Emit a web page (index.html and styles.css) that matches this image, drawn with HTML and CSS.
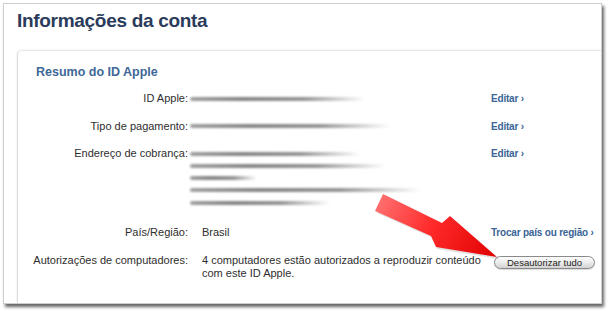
FILE: index.html
```html
<!DOCTYPE html>
<html lang="pt-BR">
<head>
<meta charset="utf-8">
<title>Informações da conta</title>
<link rel="stylesheet" href="styles.css">
</head>
<body>
<div class="frame">
  <h1 class="title">Informações da conta</h1>
  <div class="card">
    <h2 class="heading">Resumo do ID Apple</h2>
    <div class="grid">
      <div class="label">ID Apple:</div>
      <div class="value blur"><div class="bar" style="width:175px"></div></div>
      <a class="link">Editar ›</a>

      <div class="label">Tipo de pagamento:</div>
      <div class="value blur"><div class="bar" style="width:200px"></div></div>
      <a class="link">Editar ›</a>

      <div class="label">Endereço de cobrança:</div>
      <div class="value blur address">
        <div class="bar" style="width:170px"></div>
        <div class="bar" style="width:195px"></div>
        <div class="bar" style="width:67px"></div>
        <div class="bar" style="width:230px"></div>
        <div class="bar" style="width:140px"></div>
      </div>
      <a class="link">Editar ›</a>

      <div class="label">País/Região:</div>
      <div class="value">Brasil</div>
      <a class="link">Trocar país ou região ›</a>

      <div class="label">Autorizações de computadores:</div>
      <div class="value">4 computadores estão autorizados a reproduzir conteúdo com este ID Apple.</div>
      <div class="action"><button class="btn">Desautorizar tudo</button></div>
    </div>
  </div>
</div>
<svg class="arrow" width="610" height="311" viewBox="0 0 610 311">
  <defs>
    <linearGradient id="ag" x1="378" y1="200" x2="498" y2="258" gradientUnits="userSpaceOnUse">
      <stop offset="0" stop-color="#ff7070"/>
      <stop offset="0.45" stop-color="#ff2a2a"/>
      <stop offset="1" stop-color="#e00000"/>
    </linearGradient>
  </defs>
  <polygon points="384,196 444,225 452,218 499,259 437,249 433,238 377,213" fill="#000" opacity="0.12"/>
  <polygon points="383,194 442,223 450,216 497,257 436,247 431,236 375,211" fill="url(#ag)"/>
</svg>
</body>
</html>
```
FILE: styles.css
```css
* { box-sizing: border-box; }
html, body {
  margin: 0;
  padding: 0;
  width: 610px;
  height: 311px;
  overflow: hidden;
  background: #fff;
  font-family: "Liberation Sans", Arial, sans-serif;
  color: #333;
}
.frame {
  margin: 3px 0 0 3px;
  width: 599px;
  height: 301px;
  border: 1px solid #cdcdcd;
  background: #fff;
  box-shadow: 2px 3px 3px rgba(0,0,0,0.6);
  display: flex;
  flex-direction: column;
}
.title {
  margin: 0;
  height: 46px;
  padding: 5px 0 0 13px;
  font-size: 19px;
  line-height: 24px;
  font-weight: bold;
  letter-spacing: -0.3px;
  color: #2a3b5b;
}
.card {
  flex: 1;
  margin-left: 13px;
  border-top: 1px solid #e8e8e8;
  border-left: 1px solid #dcdcdc;
  border-top-left-radius: 5px;
  box-shadow: -1px -1px 2px rgba(0,0,0,0.04);
  padding: 13px 0 0 10px;
}
.heading {
  margin: 0 0 12px 8px;
  font-size: 12.5px;
  line-height: 16px;
  font-weight: bold;
  color: #3e6898;
}
.grid {
  display: grid;
  grid-template-columns: 160px 303px auto;
  row-gap: 14.5px;
  font-size: 11px;
  line-height: 13px;
}
.label {
  text-align: right;
  white-space: nowrap;
  color: #2e2e2e;
}
.value {
  padding-left: 14px;
  color: #2e2e2e;
}
.value.blur {
  padding-left: 2px;
  padding-top: 4.5px;
}
.address {
  display: flex;
  flex-direction: column;
  gap: 8.25px;
  padding-bottom: 7px;
}
.bar {
  height: 4px;
  border-radius: 2px;
  background: linear-gradient(to right, #a0a0a0 0%, #868686 30%, #959595 65%, rgba(200,200,200,0) 100%);
  filter: blur(0.9px);
}
.link {
  font-size: 10px;
  font-weight: bold;
  letter-spacing: -0.2px;
  color: #3a6496;
  white-space: nowrap;
}
.action {
  padding-top: 2px;
}
.btn {
  display: block;
  margin: 0 0 0 3px;
  height: 13px;
  padding: 0 12px;
  border: 1px solid #8a8a8a;
  border-radius: 7px;
  background: linear-gradient(#fdfdfd, #ececec 50%, #d2d2d2);
  box-shadow: 0 1px 1px rgba(0,0,0,0.15);
  font-family: "Liberation Sans", Arial, sans-serif;
  font-size: 9.5px;
  line-height: 11px;
  color: #222;
  white-space: nowrap;
}
.arrow {
  position: absolute;
  left: 0;
  top: 0;
  pointer-events: none;
}
```
